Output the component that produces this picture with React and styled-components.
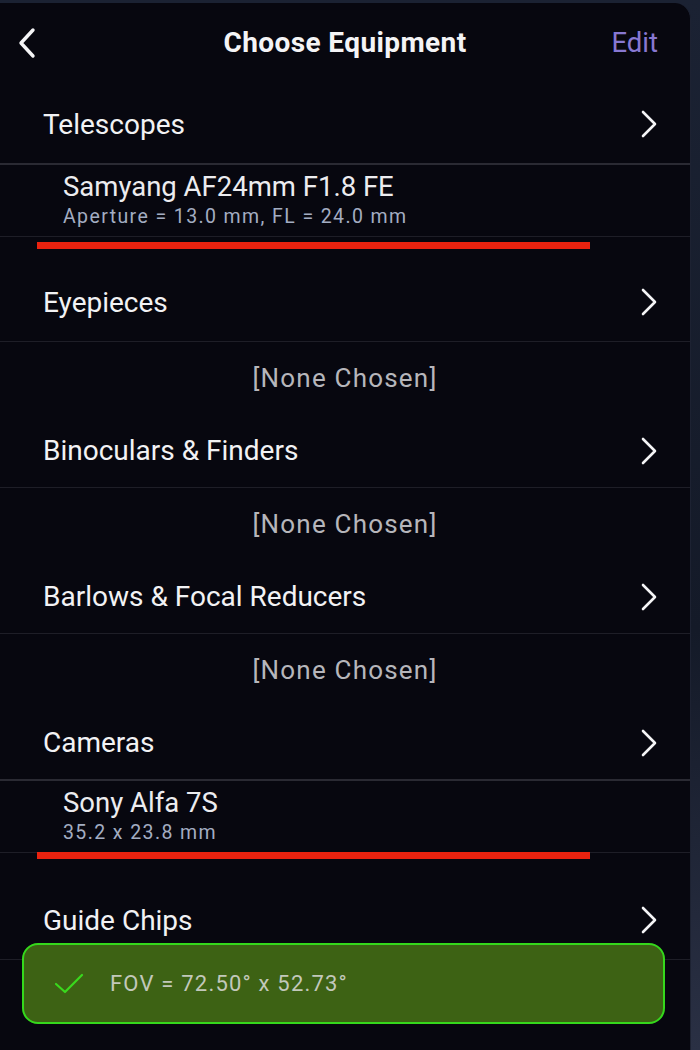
import React from "react"
import styled, { createGlobalStyle } from "styled-components"

const GlobalStyle = createGlobalStyle`
  html, body {
    margin: 0;
    padding: 0;
    background: #151a28;
  }
  body {
    font-family: Roboto, "Liberation Sans", sans-serif;
    -webkit-font-smoothing: antialiased;
  }
`

const Screen = styled.div`
  width: 700px;
  height: 1050px;
  overflow: hidden;
  display: flex;
  background: linear-gradient(180deg, #1b2233 0%, #141a28 60%, #2a3044 100%);
`

const Panel = styled.div`
  position: relative;
  width: 690px;
  margin-top: 3px;
  background: #07070f;
  border-top-right-radius: 16px;
  border-right: 1px solid #1d2232;
  display: flex;
  flex-direction: column;
`

const NavBar = styled.div`
  height: 82px;
  display: grid;
  grid-template-columns: 80px 1fr 80px;
  align-items: center;
`

const BackButton = styled.div`
  padding-left: 16px;
  display: flex;
  align-items: center;
  margin-top: -3px;
`

const Title = styled.div`
  text-align: center;
  color: #f4f4f6;
  font-size: 28px;
  font-weight: 700;
  letter-spacing: 0.4px;
  margin-top: -4px;
`

const EditButton = styled.div`
  text-align: right;
  padding-right: 32px;
  color: #8878d2;
  font-size: 27.5px;
  margin-top: -4px;
`

const SectionRow = styled.div`
  height: ${({ $height }) => $height}px;
  flex-shrink: 0;
  display: flex;
  align-items: center;
  justify-content: space-between;
  padding: 0 32px 0 43px;
  border-bottom: ${({ $thick }) => ($thick ? "2px solid #2a2a33" : "1px solid #1e1e27")};
  color: #f2f2f4;
  font-size: 28px;
`

const SelectedItem = styled.div`
  height: ${({ $height }) => $height}px;
  flex-shrink: 0;
  display: flex;
  flex-direction: column;
  justify-content: center;
  padding-left: 63px;
  border-bottom: 1px solid #1e1e27;
`

const ItemName = styled.div`
  color: #ececef;
  font-size: 27.5px;
  line-height: 30px;
`

const ItemDetail = styled.div`
  color: #a3adc2;
  font-size: 19.5px;
  letter-spacing: 1.4px;
  line-height: 24px;
  margin-top: 3px;
`

const MarkBar = styled.div`
  flex-shrink: 0;
  margin: ${({ $top }) => $top}px 0 ${({ $bottom }) => $bottom}px 37px;
  width: 553px;
  height: 7px;
  background: #ea220f;
`

const NoneRow = styled.div`
  height: ${({ $height }) => $height}px;
  flex-shrink: 0;
  display: flex;
  align-items: center;
  justify-content: center;
  color: #b6b6bb;
  font-size: 26px;
  letter-spacing: 1.2px;
`

const Toast = styled.div`
  position: absolute;
  left: 22px;
  top: 940px;
  width: 643px;
  height: 81px;
  border: 2px solid #35d81c;
  border-radius: 16px;
  background: #3d6214;
  display: flex;
  align-items: center;
  gap: 26px;
  padding-left: 30px;
  box-sizing: border-box;
`

const ToastText = styled.span`
  color: #c2c8bb;
  font-size: 22px;
  letter-spacing: 1.2px;
`

const Chevron = () => (
  <svg width="18" height="28" viewBox="0 0 18 28" fill="none">
    <path d="M3 2 L15 14 L3 26" stroke="#f4f4f6" strokeWidth="2.6" strokeLinecap="round" strokeLinejoin="round" />
  </svg>
)

const BackChevron = () => (
  <svg width="22" height="32" viewBox="0 0 22 32" fill="none">
    <path d="M17 3 L5 16 L17 29" stroke="#f4f4f6" strokeWidth="3.4" strokeLinecap="round" strokeLinejoin="round" />
  </svg>
)

const Check = () => (
  <svg width="30" height="22" viewBox="0 0 30 22" fill="none">
    <path d="M2 11 L11 19 L28 2" stroke="#3ad81d" strokeWidth="2.2" strokeLinecap="round" strokeLinejoin="round" />
  </svg>
)

const Section = ({ label, height = 73, thick }) => (
  <SectionRow $height={height} $thick={thick}>
    <span>{label}</span>
    <Chevron />
  </SectionRow>
)

const App = () => (
  <Screen>
    <GlobalStyle />
    <Panel>
      <NavBar>
        <BackButton>
          <BackChevron />
        </BackButton>
        <Title>Choose Equipment</Title>
        <EditButton>Edit</EditButton>
      </NavBar>

      <Section label="Telescopes" height={78} thick />
      <SelectedItem $height={71}>
        <ItemName>Samyang AF24mm F1.8 FE</ItemName>
        <ItemDetail>Aperture = 13.0 mm, FL = 24.0 mm</ItemDetail>
      </SelectedItem>
      <MarkBar $top={5} $bottom={14} />

      <Section label="Eyepieces" height={78} />
      <NoneRow $height={72}>[None Chosen]</NoneRow>

      <Section label="Binoculars & Finders" height={73} />
      <NoneRow $height={72}>[None Chosen]</NoneRow>

      <Section label="Barlows & Focal Reducers" height={73} />
      <NoneRow $height={72}>[None Chosen]</NoneRow>

      <Section label="Cameras" height={73} thick />
      <SelectedItem $height={71}>
        <ItemName>Sony Alfa 7S</ItemName>
        <ItemDetail>35.2 x 23.8 mm</ItemDetail>
      </SelectedItem>
      <MarkBar $top={-1} $bottom={22} />

      <Section label="Guide Chips" height={78} />

      <Toast>
        <Check />
        <ToastText>FOV = 72.50° x 52.73°</ToastText>
      </Toast>
    </Panel>
  </Screen>
)

export default App
